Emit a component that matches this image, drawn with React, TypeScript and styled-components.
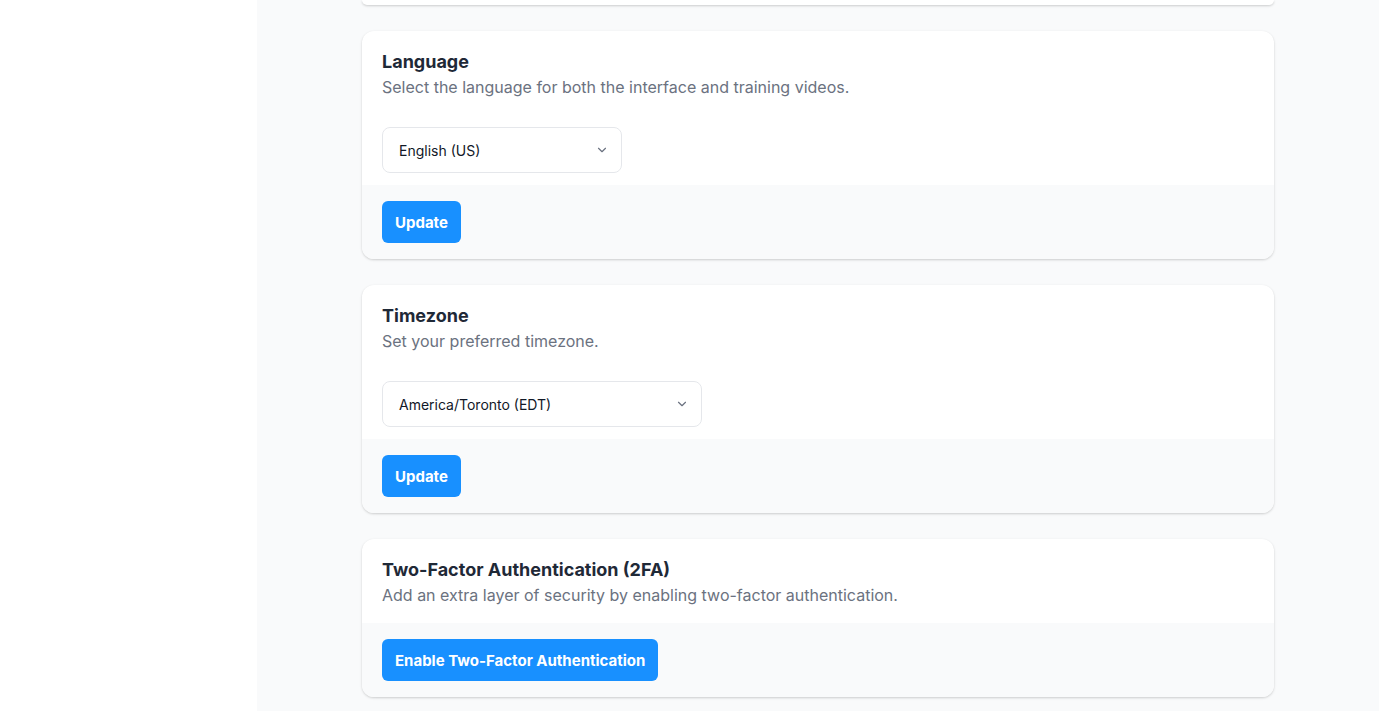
import React from "react";
import styled, { createGlobalStyle } from "styled-components";

const Global = createGlobalStyle`
  html, body { margin: 0; padding: 0; }
  body {
    font-family: Inter, "Noto Sans", "Liberation Sans", sans-serif;
    background: #ffffff;
    -webkit-font-smoothing: antialiased;
  }
  * { box-sizing: border-box; }
`;

const Layout = styled.div`
  display: flex;
  height: 711px;
  overflow: hidden;
`;

const Sidebar = styled.aside`
  width: 257px;
  flex-shrink: 0;
  background: #ffffff;
`;

const Main = styled.main`
  flex: 1;
  background: #f9fafb;
  padding: 0 105px;
`;

const Stack = styled.div`
  max-width: 912px;
  margin: 0 auto;
  display: flex;
  flex-direction: column;
  gap: 26px;
`;

const Card = styled.section<{ $cut?: boolean }>`
  background: #ffffff;
  border-radius: ${(p) => (p.$cut ? "0 0 12px 12px" : "12px")};
  box-shadow: 0 1px 3px rgba(0, 0, 0, 0.12), 0 1px 2px rgba(0, 0, 0, 0.07);
  overflow: hidden;
  ${(p) => (p.$cut ? "height: 5px;" : "")}
`;

const Body = styled.div<{ $field?: boolean }>`
  padding: 20px 20px ${(p) => (p.$field ? "12px" : "16px")};
`;

const Title = styled.h3`
  margin: 0 0 2px;
  font-size: 18px;
  line-height: 22px;
  font-weight: 700;
  color: #1f2937;
`;

const Desc = styled.p`
  margin: 0;
  font-size: 16px;
  line-height: 24px;
  color: #6b7280;
`;

const SelectBox = styled.div<{ $w: number }>`
  margin-top: 28px;
  width: ${(p) => p.$w}px;
  height: 46px;
  border: 1px solid #e5e7eb;
  border-radius: 8px;
  background: #ffffff;
  display: flex;
  align-items: center;
  justify-content: space-between;
  padding: 0 12px 0 16px;
  font-size: 14px;
  color: #111827;
`;

const Footer = styled.div`
  background: #f9fafb;
  padding: 16px 20px;
`;

const Button = styled.button`
  height: 42px;
  padding: 0 13px;
  border: none;
  border-radius: 6px;
  background: #1890ff;
  color: #ffffff;
  font-family: inherit;
  font-size: 15px;
  font-weight: 700;
  cursor: pointer;
`;

const Chevron = () => (
  <svg width="14" height="14" viewBox="0 0 24 24" fill="none" stroke="#6b7280" strokeWidth="2" strokeLinecap="round" strokeLinejoin="round">
    <path d="M6 9l6 6 6-6" />
  </svg>
);

export default function App() {
  return (
    <>
      <Global />
      <Layout>
        <Sidebar />
        <Main>
          <Stack>
            <Card $cut />
            <Card>
              <Body $field>
                <Title>Language</Title>
                <Desc>Select the language for both the interface and training videos.</Desc>
                <SelectBox $w={240}>
                  <span>English (US)</span>
                  <Chevron />
                </SelectBox>
              </Body>
              <Footer>
                <Button>Update</Button>
              </Footer>
            </Card>
            <Card>
              <Body $field>
                <Title>Timezone</Title>
                <Desc>Set your preferred timezone.</Desc>
                <SelectBox $w={320}>
                  <span>America/Toronto (EDT)</span>
                  <Chevron />
                </SelectBox>
              </Body>
              <Footer>
                <Button>Update</Button>
              </Footer>
            </Card>
            <Card>
              <Body>
                <Title>Two-Factor Authentication (2FA)</Title>
                <Desc>Add an extra layer of security by enabling two-factor authentication.</Desc>
              </Body>
              <Footer>
                <Button>Enable Two-Factor Authentication</Button>
              </Footer>
            </Card>
          </Stack>
        </Main>
      </Layout>
    </>
  );
}
